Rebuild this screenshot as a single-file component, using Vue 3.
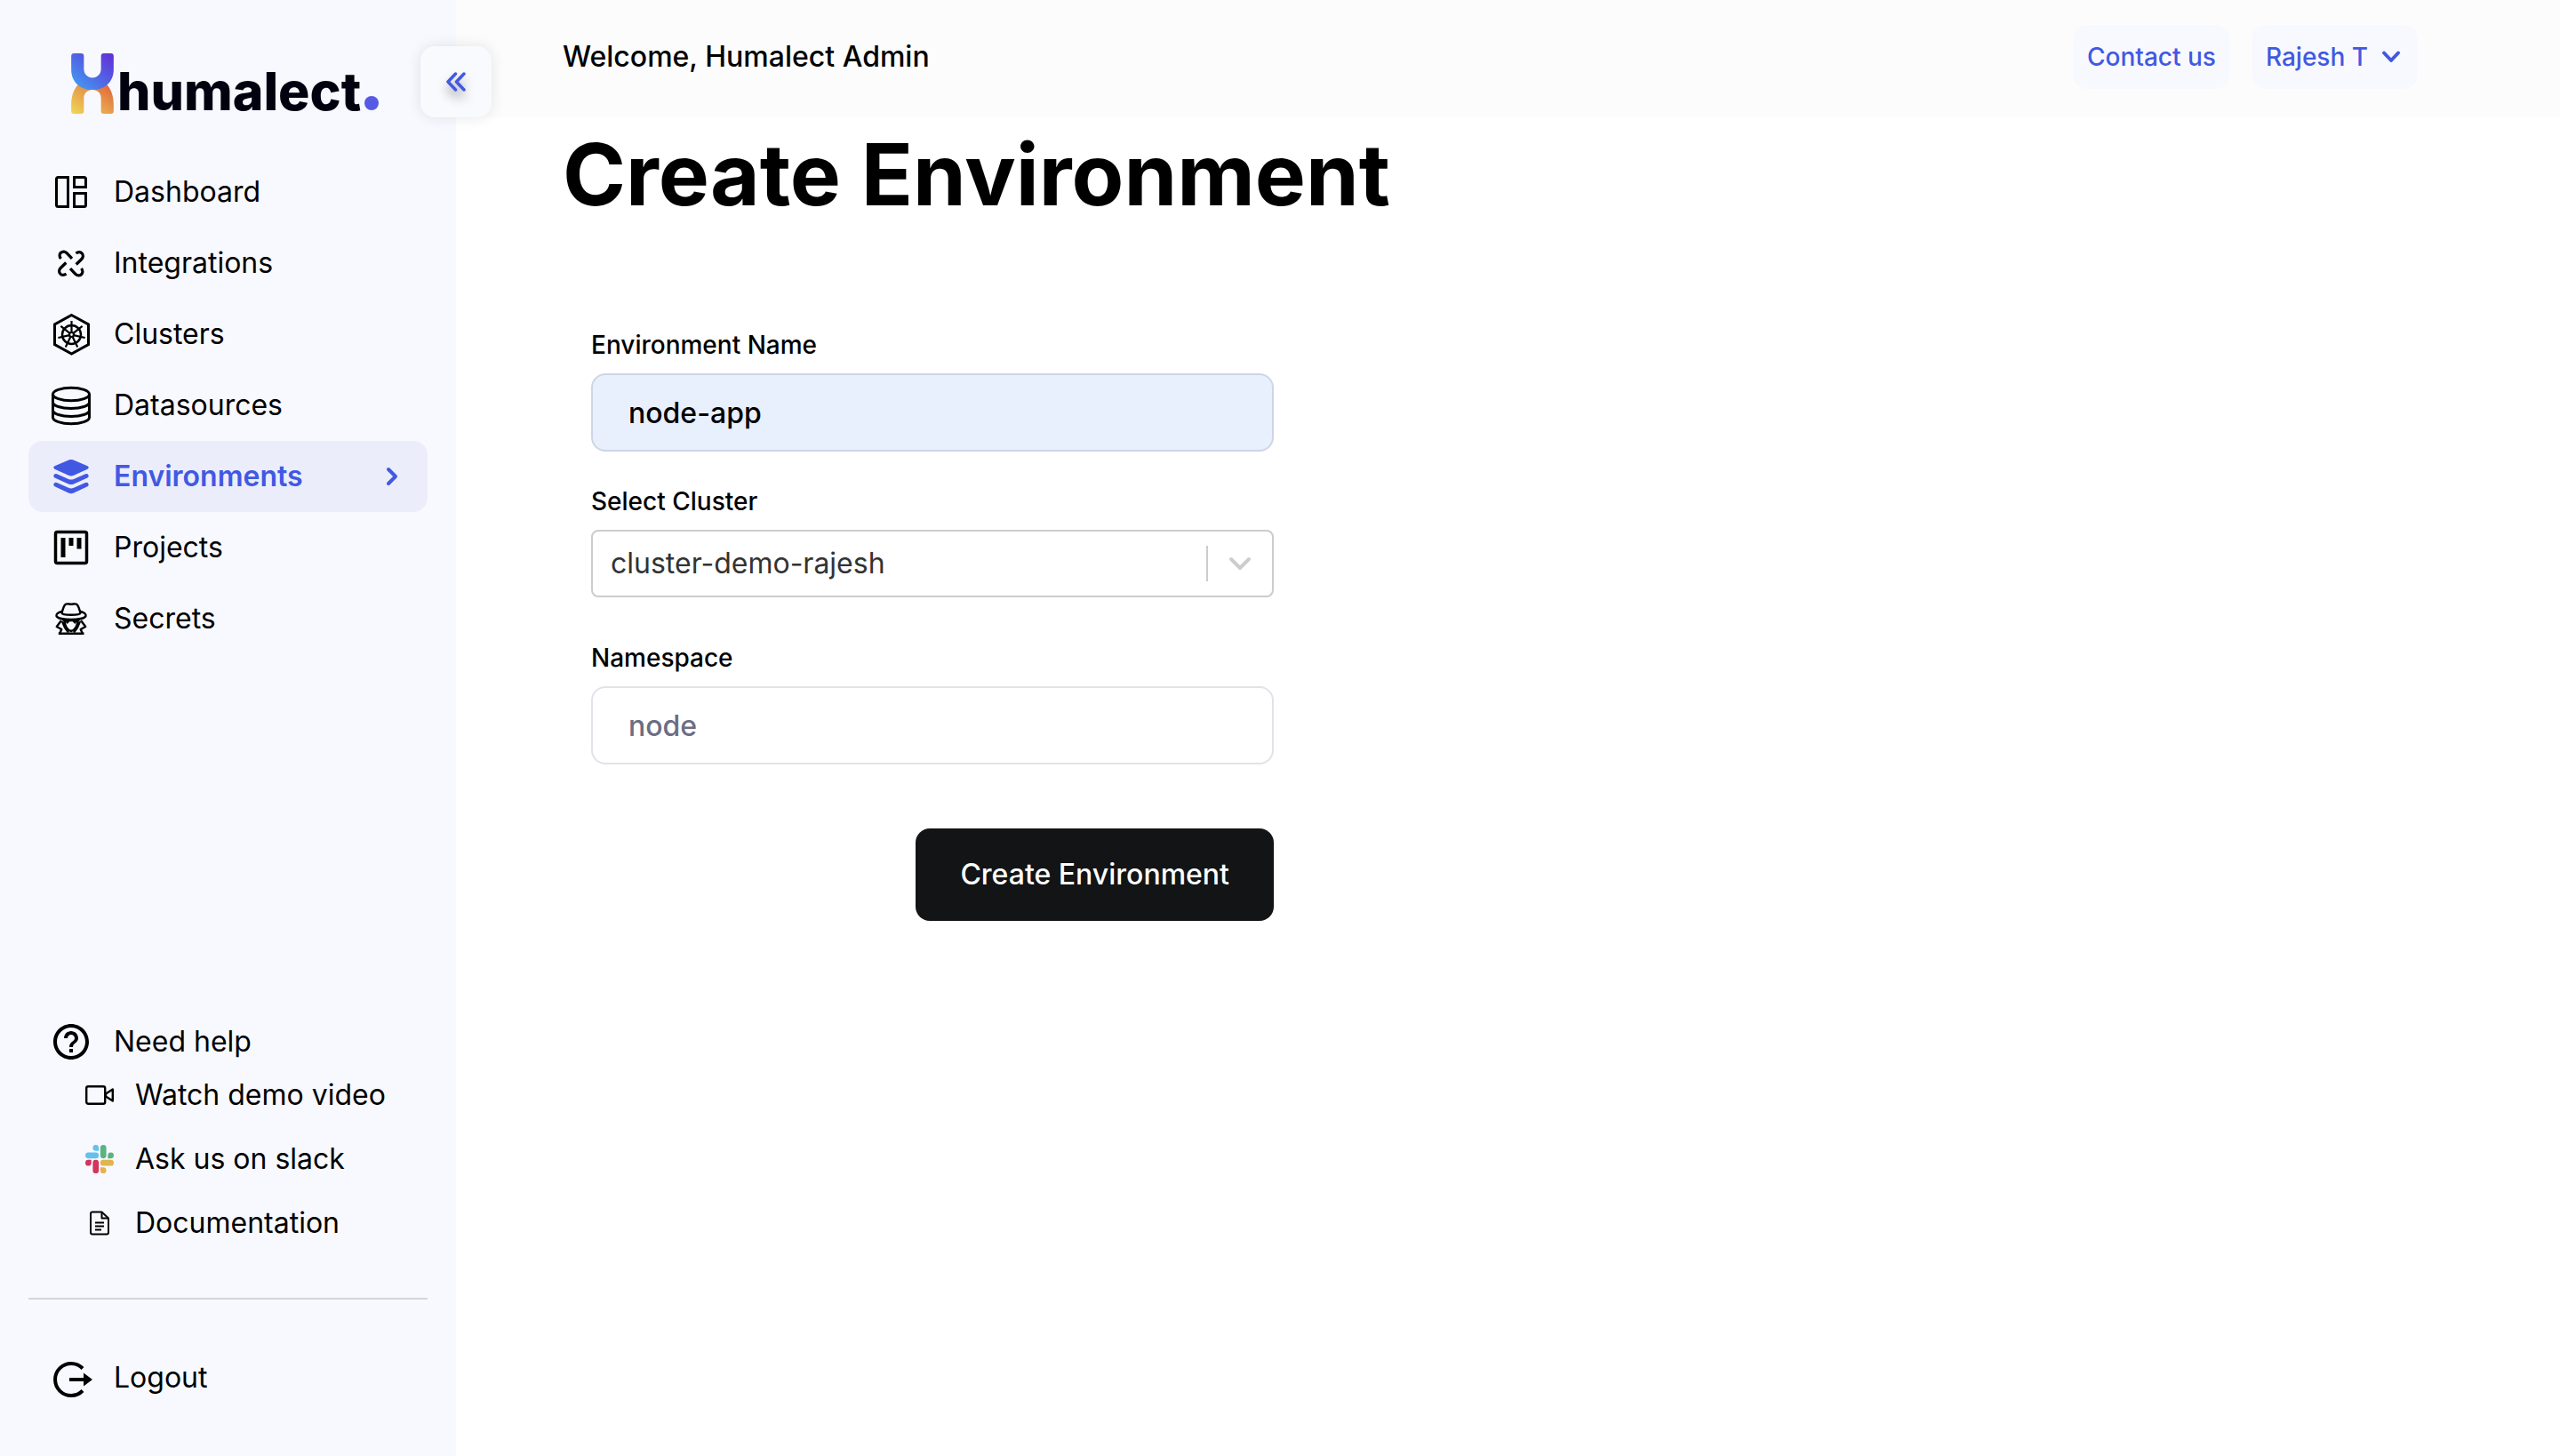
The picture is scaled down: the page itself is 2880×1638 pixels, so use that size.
<script setup>
import { ref } from 'vue'

const navItems = [
  { label: 'Dashboard', icon: 'dashboard' },
  { label: 'Integrations', icon: 'integrations' },
  { label: 'Clusters', icon: 'clusters' },
  { label: 'Datasources', icon: 'datasources' },
  { label: 'Environments', icon: 'environments', active: true },
  { label: 'Projects', icon: 'projects' },
  { label: 'Secrets', icon: 'secrets' },
]

const helpItems = [
  { label: 'Watch demo video', icon: 'video' },
  { label: 'Ask us on slack', icon: 'slack' },
  { label: 'Documentation', icon: 'document' },
]

const environmentName = ref('node-app')
const cluster = ref('cluster-demo-rajesh')
const namespace = ref('')
</script>

<template>
  <div class="layout">
    <svg class="sprite" width="0" height="0" aria-hidden="true">
      <symbol id="icon-dashboard" viewBox="0 0 48 48">
        <g fill="none" stroke="currentColor" stroke-width="3">
          <path d="M20.500 7.500V40.500H9.500a2 2 0 0 1-2-2V9.500a2 2 0 0 1 2-2Z" />
          <path d="M27.500 7.500H38.500a2 2 0 0 1 2 2V18.500H27.500Z" />
          <path d="M27.500 25.500H40.500V38.500a2 2 0 0 1-2 2H27.500Z" />
        </g>
      </symbol>
      <symbol id="icon-integrations" viewBox="0 0 48 48">
        <g fill="none" stroke="currentColor" stroke-width="3.300">
          <path id="hook" d="M12.500 19C10.500 16.500 10.800 13.800 12.500 12.300C14.500 10.600 17.300 10.800 19.300 12.900L25 18.800" />
          <use href="#hook" transform="rotate(90 24 24.500)" />
          <use href="#hook" transform="rotate(180 24 24.500)" />
          <use href="#hook" transform="rotate(270 24 24.500)" />
        </g>
      </symbol>
      <symbol id="icon-clusters" viewBox="0 0 48 48">
        <g fill="none" stroke="currentColor">
          <path stroke-width="3" d="M24.500 2.500L43.500 13V35.500L24.500 46L5.500 35.500V13Z" />
          <circle cx="24.500" cy="24.500" r="10.500" stroke-width="2.500" />
          <g stroke-width="2.200">
            <path id="spoke" d="M24.500 22V9" />
            <use href="#spoke" transform="rotate(51.430 24.500 24.500)" />
            <use href="#spoke" transform="rotate(102.860 24.500 24.500)" />
            <use href="#spoke" transform="rotate(154.290 24.500 24.500)" />
            <use href="#spoke" transform="rotate(205.710 24.500 24.500)" />
            <use href="#spoke" transform="rotate(257.140 24.500 24.500)" />
            <use href="#spoke" transform="rotate(308.570 24.500 24.500)" />
            <circle cx="24.500" cy="24.500" r="2.500" />
          </g>
        </g>
      </symbol>
      <symbol id="icon-datasources" viewBox="0 0 48 48">
        <g fill="none" stroke="currentColor" stroke-width="3">
          <ellipse cx="24" cy="11.500" rx="20.500" ry="7.300" />
          <path d="M3.500 11.500V37.500C3.500 41.500 12.700 44.700 24 44.700S44.500 41.500 44.500 37.500V11.500" />
          <path d="M3.500 20.500C3.500 24.500 12.700 27.500 24 27.500S44.500 24.500 44.500 20.500" />
          <path d="M3.500 29.500C3.500 33.500 12.700 36.500 24 36.500S44.500 33.500 44.500 29.500" />
        </g>
      </symbol>
      <symbol id="icon-environments" viewBox="0 0 48 48">
        <path fill="currentColor" d="M22 5.300Q24 4.500 26 5.300L42.500 12.300Q45 14 42.500 15.800L27 22.800Q24 24.200 21 22.800L5.500 15.800Q3 14 5.500 12.300Z" />
        <path fill="currentColor" d="M5.500 21.200Q6.500 20.600 8 21.200L21 27Q24 28.200 27 27L40 21.200Q41.500 20.600 42.500 21.200Q45 23.500 42.500 25.500L27 32.400Q24 33.600 21 32.400L5.500 25.500Q3 23.500 5.500 21.200Z" />
        <path fill="currentColor" d="M5.500 31Q6.500 30.400 8 31L21 36.800Q24 38 27 36.800L40 31Q41.500 30.400 42.500 31Q45 33.300 42.500 35.300L27 42.600Q24 44 21 42.600L5.500 35.300Q3 33.300 5.500 31Z" />
      </symbol>
      <symbol id="icon-projects" viewBox="0 0 48 48">
        <rect x="6.500" y="6.500" width="35" height="35" rx="2" fill="none" stroke="currentColor" stroke-width="3.500" />
        <path fill="currentColor" d="M12.500 13h5v22h-5zM21.500 13h5v9h-5zM30.500 13h5v12.500h-5z" />
      </symbol>
      <symbol id="icon-secrets" viewBox="0 0 48 48">
        <g fill="none" stroke="currentColor" stroke-width="2.400" stroke-linejoin="round">
          <path d="M13.500 17.500C14.800 13.500 15.500 10 17.200 8.300C19 6.300 21.500 7.800 24 7.800S29 6.300 30.800 8.300C32.500 10 33.200 13.500 34.500 17.500C34 20.500 14 20.500 13.500 17.500Z" />
          <path d="M13.500 16C9 17 7 19 7.500 21C9.500 26.300 38.500 26.300 40.500 21C41 19 39 17 34.500 16" />
          <path d="M13 26L7.800 33L13.300 36L11 41M35 26L40.200 33L34.700 36L37 41" />
          <path d="M16.500 26C17 32 19.500 36.800 24 38C28.500 36.800 31 32 31.500 26" />
          <path d="M14 27L17 34L21 39.500M34 27L31 34L27 39.500" />
        </g>
        <path fill="currentColor" d="M13 24.500H35L32 27.200H30.500L28.300 30L25.700 27.200H22.300L19.700 30L17.500 27.200H16ZM9.800 39.500H38.500V42H9.800Z" />
      </symbol>
      <symbol id="icon-help" viewBox="0 0 24 24">
        <path fill="currentColor" d="M11 18h2v-2h-2v2zm1-16C6.480 2 2 6.480 2 12s4.480 10 10 10 10-4.480 10-10S17.520 2 12 2zm0 18c-4.410 0-8-3.590-8-8s3.590-8 8-8 8 3.590 8 8-3.590 8-8 8zm0-14c-2.210 0-4 1.790-4 4h2c0-1.100.900-2 2-2s2 .900 2 2c0 2-3 1.750-3 5h2c0-2.250 3-2.500 3-5 0-2.210-1.790-4-4-4z" />
      </symbol>
      <symbol id="icon-video" viewBox="0 0 32 32">
        <g fill="none" stroke="currentColor" stroke-width="2.400" stroke-linejoin="round">
          <rect x="1.200" y="6.200" width="21" height="19.600" rx="2" />
          <path d="M30.800 9.500V22.500L23 17.500V14.500Z" />
        </g>
      </symbol>
      <symbol id="icon-slack" viewBox="0 0 24 24">
        <path fill="#d1365c" d="M5.042 15.165a2.528 2.528 0 0 1-2.520 2.523A2.528 2.528 0 0 1 0 15.165a2.527 2.527 0 0 1 2.522-2.520h2.520v2.520zM6.313 15.165a2.527 2.527 0 0 1 2.521-2.520 2.527 2.527 0 0 1 2.521 2.520v6.313A2.528 2.528 0 0 1 8.834 24a2.528 2.528 0 0 1-2.521-2.522v-6.313z" />
        <path fill="#63c1ec" d="M8.834 5.042a2.528 2.528 0 0 1-2.521-2.520A2.528 2.528 0 0 1 8.834 0a2.528 2.528 0 0 1 2.521 2.522v2.520H8.834zM8.834 6.313a2.528 2.528 0 0 1 2.521 2.521 2.528 2.528 0 0 1-2.521 2.521H2.522A2.528 2.528 0 0 1 0 8.834a2.528 2.528 0 0 1 2.522-2.521h6.312z" />
        <path fill="#5bb381" d="M18.956 8.834a2.528 2.528 0 0 1 2.522-2.521A2.528 2.528 0 0 1 24 8.834a2.528 2.528 0 0 1-2.522 2.521h-2.522V8.834zM17.688 8.834a2.528 2.528 0 0 1-2.523 2.521 2.527 2.527 0 0 1-2.520-2.521V2.522A2.527 2.527 0 0 1 15.165 0a2.528 2.528 0 0 1 2.523 2.522v6.312z" />
        <path fill="#e3b34c" d="M15.165 18.956a2.528 2.528 0 0 1 2.523 2.522A2.528 2.528 0 0 1 15.165 24a2.527 2.527 0 0 1-2.520-2.522v-2.522h2.520zM15.165 17.688a2.527 2.527 0 0 1-2.520-2.523 2.526 2.526 0 0 1 2.520-2.520h6.313A2.527 2.527 0 0 1 24 15.165a2.528 2.528 0 0 1-2.522 2.523h-6.313z" />
      </symbol>
      <symbol id="icon-document" viewBox="0 0 32 32">
        <g fill="none" stroke="currentColor" stroke-width="2" stroke-linejoin="round">
          <path d="M8 3.500H18.500L26 10.500V26.500a2 2 0 0 1-2 2H8a2 2 0 0 1-2-2V5.500a2 2 0 0 1 2-2Z" />
          <path d="M18.500 3.500V10.500H26M11 15.500H21M11 19.500H21M11 23.500H18" />
        </g>
      </symbol>
      <symbol id="icon-logout" viewBox="0 -2 48 48">
        <path fill="none" stroke="currentColor" stroke-width="4" d="M37 11.500A18 18 0 1 0 37 36.500" />
        <path fill="currentColor" d="M22 22H38V16.500L48 24L38 31.500V26H22Z" />
      </symbol>
    </svg>

    <aside class="sidebar">
      <a class="logo" href="#" aria-label="humalect">
        <svg class="logo-mark" viewBox="0 0 47 67" aria-hidden="true">
          <defs>
            <linearGradient id="logo-top" x1="0" y1="1" x2="1" y2="0">
              <stop offset="0.100" stop-color="#4499f2" />
              <stop offset="0.550" stop-color="#5260e4" />
              <stop offset="1" stop-color="#642bd6" />
            </linearGradient>
            <linearGradient id="logo-bottom" x1="0" y1="1" x2="1" y2="0">
              <stop offset="0" stop-color="#edd957" />
              <stop offset="0.500" stop-color="#e79d4b" />
              <stop offset="1" stop-color="#e05e38" />
            </linearGradient>
          </defs>
          <path fill="url(#logo-bottom)" d="M0 57C0 45 4 38 9 33H38C43 38 47 45 47 57V64a3 3 0 0 1-3 3H36a3 3 0 0 1-3-3V50C33 44 29 40.500 23.500 40.500S14 44 14 50V64a3 3 0 0 1-3 3H3a3 3 0 0 1-3-3Z" />
          <path fill="url(#logo-top)" d="M0 3a3 3 0 0 1 3-3H11a3 3 0 0 1 3 3V17C14 23 18 27 23.500 27S33 23 33 17V3a3 3 0 0 1 3-3H44a3 3 0 0 1 3 3V18C47 32 37 40.500 23.500 40.500S0 32 0 18Z" />
        </svg>
        <span class="logo-name">humalect</span>
        <span class="logo-dot"></span>
      </a>

      <button class="collapse" type="button" aria-label="Collapse sidebar">
        <svg viewBox="0 0 24 24" width="24" height="24" aria-hidden="true">
          <path fill="none" stroke="currentColor" stroke-width="3.500" stroke-linejoin="round" stroke-linecap="round" d="M11.500 3L3 12L11.500 21M21 3L12.500 12L21 21" />
        </svg>
      </button>

      <nav class="nav">
        <a v-for="item in navItems" :key="item.label" href="#" class="nav-item" :class="{ active: item.active }">
          <svg class="nav-icon" aria-hidden="true"><use :href="'#icon-' + item.icon" /></svg>
          <span class="nav-label">{{ item.label }}</span>
          <svg v-if="item.active" class="nav-chevron" viewBox="0 0 16 24" aria-hidden="true">
            <path fill="none" stroke="currentColor" stroke-width="4" stroke-linejoin="round" stroke-linecap="round" d="M4 4L12 12L4 20" />
          </svg>
        </a>
      </nav>

      <div class="help">
        <a href="#" class="help-title">
          <svg class="nav-icon" aria-hidden="true"><use href="#icon-help" /></svg>
          <span>Need help</span>
        </a>
        <a v-for="item in helpItems" :key="item.label" href="#" class="help-item">
          <svg class="help-icon" aria-hidden="true"><use :href="'#icon-' + item.icon" /></svg>
          <span>{{ item.label }}</span>
        </a>
      </div>

      <hr class="divider" />

      <a href="#" class="nav-item">
        <svg class="nav-icon" aria-hidden="true"><use href="#icon-logout" /></svg>
        <span class="nav-label">Logout</span>
      </a>
    </aside>

    <div class="page">
      <header class="topbar">
        <p class="welcome">Welcome, Humalect Admin</p>
        <a class="pill" href="#">Contact us</a>
        <button class="pill" type="button">
          Rajesh T
          <svg viewBox="0 0 28 16" width="28" height="16" aria-hidden="true">
            <path fill="none" stroke="currentColor" stroke-width="4" stroke-linejoin="round" stroke-linecap="round" d="M6 3.500L14 12L22 3.500" />
          </svg>
        </button>
      </header>

      <main class="content">
        <h1>Create Environment</h1>
        <form class="form" @submit.prevent>
          <div class="field">
            <label for="environment-name">Environment Name</label>
            <input id="environment-name" v-model="environmentName" class="filled" type="text" />
          </div>
          <div class="field">
            <label for="cluster">Select Cluster</label>
            <div class="select">
              <select id="cluster" v-model="cluster">
                <option>cluster-demo-rajesh</option>
              </select>
              <span class="select-arrow" aria-hidden="true">
                <svg viewBox="0 0 28 20" width="28" height="20">
                  <path fill="none" stroke="currentColor" stroke-width="4" stroke-linejoin="round" stroke-linecap="round" d="M4 5L14 15L24 5" />
                </svg>
              </span>
            </div>
          </div>
          <div class="field">
            <label for="namespace">Namespace</label>
            <input id="namespace" v-model="namespace" type="text" placeholder="node" />
          </div>
          <button class="submit" type="submit">Create Environment</button>
        </form>
      </main>
    </div>
  </div>
</template>

<style>
body {
  background: #fff;
}
</style>

<style scoped>
.layout,
.layout * {
  box-sizing: border-box;
}

.layout {
  display: flex;
  min-height: 100vh;
  font-family: Inter, "Liberation Sans", sans-serif;
  font-size: 32px;
  line-height: 40px;
  color: #000;
}

.sprite {
  position: absolute;
}

a {
  color: inherit;
  text-decoration: none;
}

input,
select,
button {
  font: inherit;
  color: inherit;
}

/* Sidebar */
.sidebar {
  position: relative;
  display: flex;
  flex-direction: column;
  flex: 0 0 513px;
  padding: 60px 32px 48px;
  background: #f8f9fe;
}

.logo {
  display: flex;
  align-items: flex-end;
  height: 72px;
  margin: 0 48px 44px;
}

.logo-mark {
  flex: none;
  align-self: flex-start;
  width: 48px;
  height: 68px;
}

.logo-name {
  margin-left: 4px;
  font-size: 59px;
  line-height: 58px;
  font-weight: 800;
  color: #02010f;
}

.logo-dot {
  flex: none;
  width: 16px;
  height: 16px;
  margin: 0 0 8px 4px;
  border-radius: 50%;
  background: #575be4;
}

.collapse {
  position: absolute;
  top: 52px;
  right: -40px;
  display: flex;
  align-items: center;
  justify-content: center;
  width: 80px;
  height: 80px;
  padding: 0;
  border: 0;
  border-radius: 16px;
  background: #f9fafe;
  color: #4159e2;
  box-shadow: 0 0 16px rgba(0, 0, 0, 0.1);
}

.collapse svg {
  filter: drop-shadow(0 8px 6px rgba(0, 0, 0, 0.35));
}

.nav {
  display: flex;
  flex-direction: column;
}

.nav-item {
  display: flex;
  align-items: center;
  gap: 24px;
  height: 80px;
  padding: 0 32px 0 24px;
  border-radius: 16px;
}

.nav-item.active {
  background: #ecedfb;
  color: #4159e2;
  font-weight: 600;
}

.nav-icon {
  flex: none;
  width: 48px;
  height: 48px;
}

.nav-label {
  flex: 1;
}

.nav-chevron {
  width: 16px;
  height: 24px;
}

.help {
  display: flex;
  flex-direction: column;
  margin-top: auto;
}

.help-title {
  display: flex;
  align-items: center;
  gap: 24px;
  height: 48px;
  padding-left: 24px;
}

.help-item {
  display: flex;
  align-items: center;
  gap: 24px;
  height: 72px;
  padding-left: 64px;
}

.help-icon {
  flex: none;
  width: 32px;
  height: 32px;
}

.divider {
  width: 100%;
  height: 2px;
  margin: 48px 0;
  border: 0;
  background: #d5d6da;
}

/* Page */
.page {
  flex: 1;
  min-width: 0;
}

.topbar {
  display: flex;
  align-items: center;
  gap: 24px;
  height: 132px;
  padding: 0 160px 4px 120px;
  background: #fcfcfc;
}

.welcome {
  margin: 0 auto 0 0;
  font-weight: 500;
}

.pill {
  display: flex;
  align-items: center;
  gap: 12px;
  height: 72px;
  padding: 0 16px;
  border: 0;
  border-radius: 16px;
  background: #f8f9fe;
  color: #4159e2;
  font-size: 28px;
  font-weight: 500;
}

.content {
  padding: 0 120px;
}

h1 {
  margin: 0 0 108px;
  font-size: 96px;
  line-height: 128px;
  font-weight: 700;
}

.form {
  display: flex;
  flex-direction: column;
  gap: 36px;
  max-width: 800px;
  padding-left: 32px;
}

.field {
  display: flex;
  flex-direction: column;
  gap: 12px;
}

label {
  font-size: 28px;
  font-weight: 500;
}

input {
  width: 100%;
  height: 88px;
  padding: 0 40px;
  border: 2px solid #e2e2e8;
  border-radius: 16px;
  background: #fff;
  font-weight: 500;
}

input.filled {
  border-color: #ced6e6;
  background: #e8effd;
}

input::placeholder {
  color: #6b6d84;
  opacity: 1;
}

.select {
  display: grid;
  align-items: center;
  height: 76px;
  margin-bottom: 12px;
}

.select select {
  grid-area: 1 / 1;
  width: 100%;
  height: 76px;
  padding: 0 96px 0 20px;
  border: 2px solid #ccc;
  border-radius: 8px;
  background: #fff;
  color: #333;
  appearance: none;
}

.select-arrow {
  grid-area: 1 / 1;
  justify-self: end;
  display: flex;
  align-items: center;
  height: 40px;
  margin-right: 24px;
  padding-left: 22px;
  border-left: 2px solid #ccc;
  color: #ccc;
  pointer-events: none;
}

.submit {
  align-self: flex-end;
  height: 104px;
  margin-top: 36px;
  padding: 0 50px;
  border: 0;
  border-radius: 16px;
  background: #121416;
  color: #fff;
  font-weight: 500;
}
</style>
